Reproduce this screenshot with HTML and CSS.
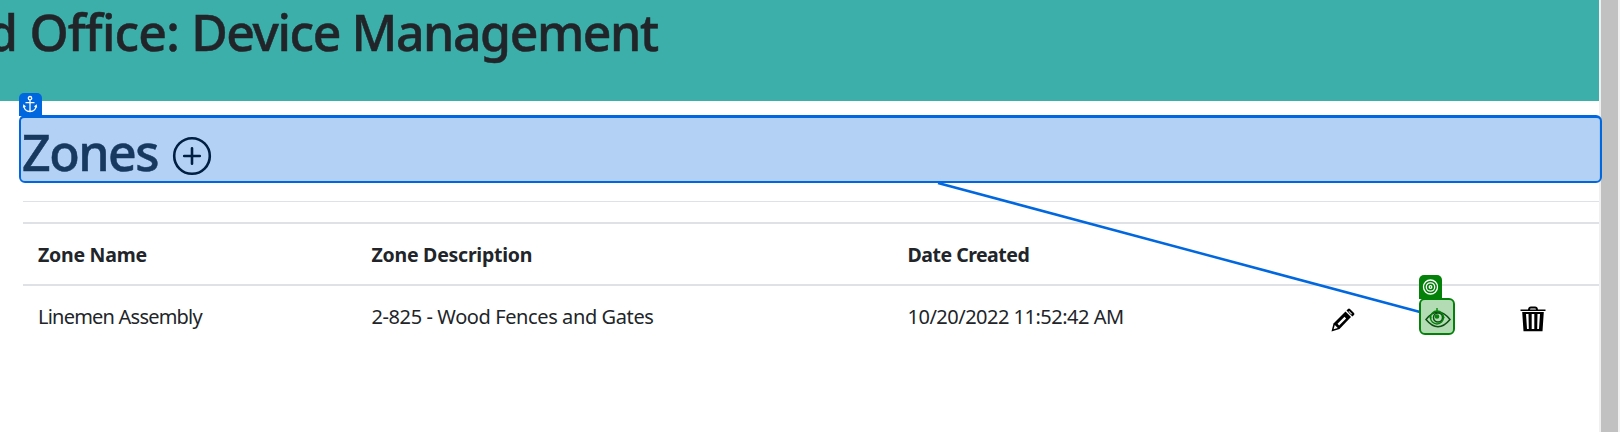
FILE: index.html
```html
<!DOCTYPE html>
<html lang="en">
<head>
<meta charset="utf-8">
<title>Device Management</title>
<link rel="stylesheet" href="styles.css">
</head>
<body>
<div class="page">
  <main class="content">
    <header class="banner"><h1 class="banner-title"><span class="office">d Office: </span>Device Management</h1></header>
    <section class="zones">
      <div class="zones-head">
        <h2 class="zones-title">Zones</h2>
        <svg class="add" viewBox="0 0 40 40"><circle cx="20" cy="20" r="17.8"/><path d="M20 12.2v15.6M12.2 20h15.6"/></svg>
      </div>
      <div class="table">
        <div class="row head">
          <span><b class="t-name">Zone Name</b></span><span><b class="t-desc">Zone Description</b></span><span><b class="t-date">Date Created</b></span>
        </div>
        <div class="row">
          <span class="c-name">Linemen Assembly</span><span class="c-desc">2-825 - Wood Fences and Gates</span><span class="c-date">10/20/2022 11:52:42 AM</span>
          <svg class="icon pencil" viewBox="0 0 24 24"><path class="solid" d="M.5 23.500l2-8L14.500 3.500l5.500 5.500L8.500 21z"/><path class="solid" d="M15.500 2.500l1.500-1.500q1-.8 2 0l4 4q.9 1 0 2l-1.700 1.600z"/><path class="hole" d="M2.600 21.300l1.200-4.200 3 3zM6.500 15.800L13.500 8.800l1.600 1.600-7 7zM17.500 3.600l2.800 2.800.6-.6-2.800-2.800z"/></svg>
          <svg class="icon eye" viewBox="0 0 26 26"><path d="M1 13.500Q13-1.500 25 13.500Q13 28 1 13.500z"/><circle cx="13" cy="11.500" r="4.500"/></svg>
          <svg class="icon trash" viewBox="0 0 26 26"><path class="solid" d="M.5 3.500h7.500Q8.300.4 11 .4h4Q17.700.4 18 3.500h7.500v1.500H.5zM2.200 6h21.600l-1.300 19.300h-19z"/><path class="hole" d="M10 3.500h6l-.5-1h-5zM6 8h2.500l.3 15H7zM11.700 8h2.600v15h-2.600zM17.500 8H20l-1 15h-1.800z"/></svg>
        </div>
      </div>
    </section>
  </main>
  <div class="scrollbar"></div>
</div>
<svg class="connector" viewBox="0 0 1620 432"><path d="M938 183L1420 312"/></svg>
<div class="mark anchor-box"></div>
<div class="tab anchor-tab"><svg viewBox="0 0 22 22"><circle cx="11" cy="5.200" r="1.700"/><path d="M11 7v11.500M6.500 9.700h9M4.800 12.500Q5.200 18.500 11 18.500Q16.800 18.500 17.200 12.500M4.500 14.500l.3-2 1.700 1.200M17.500 14.500l-.3-2-1.700 1.200"/></svg></div>
<div class="mark target-box"><svg viewBox="0 0 20 20"><circle cx="10" cy="10.500" r="6.500"/><circle class="core" cx="10" cy="9.500" r="1.600"/><path d="M10 1v3.500M2.500 10.500h2M15.500 10.500h2"/></svg></div>
<div class="tab target-tab"><svg viewBox="0 0 22 22"><circle cx="11.500" cy="12" r="7"/><circle cx="11.500" cy="12" r="4.200"/><circle cx="11.500" cy="12" r="1.300"/></svg></div>
</body>
</html>
```
FILE: styles.css
```css
* { box-sizing: border-box; }
body { margin: 0; width: 1620px; height: 432px; overflow: hidden; position: relative; background: #fff; color: #212529; font-family: "Noto Sans", "Open Sans", sans-serif; }
.page { display: flex; height: 432px; }
.content { width: 1599px; overflow: hidden; }
.banner { height: 101px; background: #3cafaa; display: flex; }
h1, h2 { margin: 0; font-size: 50px; line-height: 60px; font-weight: 500; white-space: pre; -webkit-text-stroke: 0.5px currentColor; }
.banner-title { margin: 2px 0 0 -13px; letter-spacing: -1.450px; }
.office { letter-spacing: -0.800px; }
.zones { padding-left: 23px; }
.zones-head { display: flex; align-items: center; gap: 14px; height: 100px; padding-top: 9px; }
.zones-title { letter-spacing: -1.500px; margin: -8px 0 0 -1px; }
.add { width: 40px; height: 40px; fill: none; stroke: #000; stroke-width: 2.6; stroke-linecap: round; }
.table { border-top: 1px solid #dee2e6; padding-top: 20px; }
.row { display: grid; grid-template-columns: 333.500px 536px 423px 94px 95px 60px; height: 62px; padding: 2px 0 0 15px; border-top: 2px solid #dee2e6; align-items: center; font-size: 20px; line-height: 30px; white-space: nowrap; }
.head { font-size: 19.500px; }
.head b { font-weight: 700; }
.t-name, .t-desc { letter-spacing: -0.250px; }
.t-date { letter-spacing: -0.500px; }
.c-name { letter-spacing: -0.780px; }
.c-desc { letter-spacing: -0.400px; }
.c-date { letter-spacing: -0.500px; }
.icon { width: 26px; height: 26px; }
.pencil { width: 24px; height: 24px; margin-top: 5px; }
.solid { fill: #000; }
.hole { fill: #fff; }
.eye { fill: none; stroke: #123618; stroke-width: 1.500; margin-top: 3px; }
.trash { margin-top: 4px; }
.scrollbar { width: 21px; background: #c1c1c1; border-left: 2px solid #f0f0f0; border-right: 2px solid #f1f1f1; }
.connector { position: absolute; inset: 0; width: 1620px; height: 432px; fill: none; stroke: #0067df; stroke-width: 2.500; }
.mark { position: absolute; border: 3px solid #0067df; border-radius: 6px; background: rgba(0, 103, 223, 0.3); background-clip: padding-box; }
.anchor-box { left: 19px; top: 115px; width: 1583px; height: 68px; border-width: 3px 2px 2px 2px; }
.tab { position: absolute; width: 23px; height: 23px; border-radius: 5px 5px 0 0; background: #0067df; }
.tab svg { display: block; width: 22px; height: 22px; fill: none; stroke: #fff; stroke-width: 1.300; }
.anchor-tab { left: 19px; top: 93px; }
.target-box { left: 1419px; top: 298px; width: 36px; height: 37px; border-width: 2px; border-color: #038108; background-color: rgba(3, 135, 8, 0.3); display: grid; place-items: center; }
.target-box svg { width: 20px; height: 20px; fill: none; stroke: #038108; stroke-width: 1.400; }
.target-box .core { fill: #038108; }
.target-tab { left: 1419px; top: 275px; height: 24px; background: #038108; }
```
